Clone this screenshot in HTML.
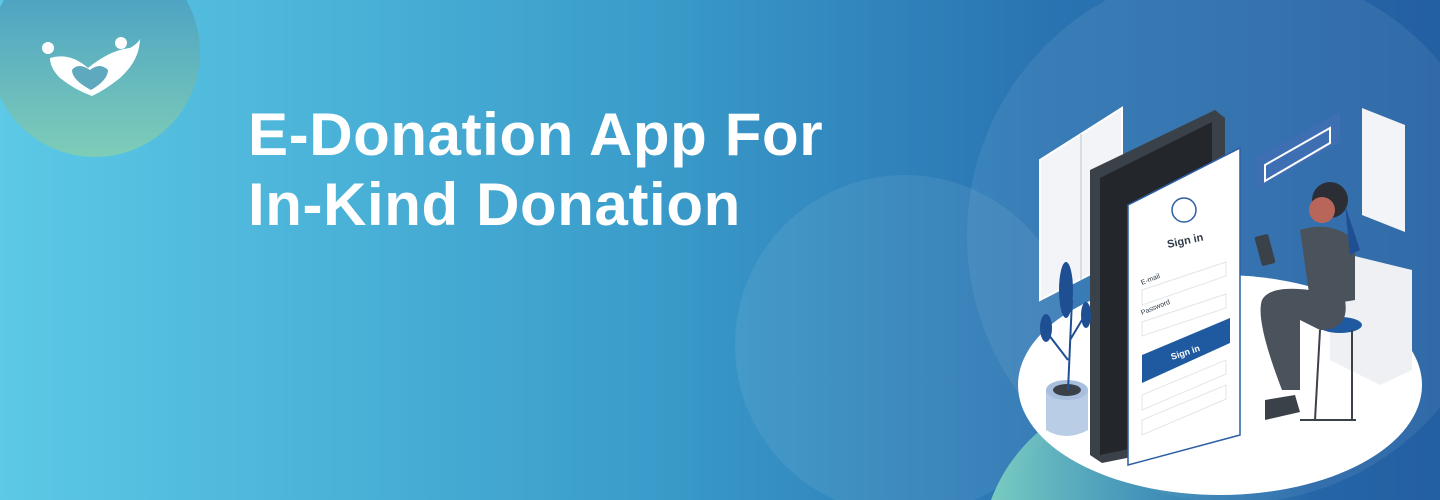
<!DOCTYPE html>
<html><head><meta charset="utf-8"><style>
html,body{margin:0;padding:0;width:1440px;height:500px;overflow:hidden}
body{position:relative;background:linear-gradient(90deg,#5cc9e6 0%,#3a9cca 45%,#2a74b2 72%,#235fa2 100%);font-family:"Liberation Sans",sans-serif}
.t{position:absolute;left:248px;color:#fff;font-weight:bold;font-size:60px;letter-spacing:0.6px;line-height:70px;top:100px;white-space:nowrap}
svg{position:absolute;left:0;top:0}
</style></head><body>
<svg width="1440" height="500" viewBox="0 0 1440 500">
<defs>
<linearGradient id="g1" x1="0" y1="0" x2="0" y2="1"><stop offset="0" stop-color="#3f97c6"/><stop offset="1" stop-color="#7ecdb8"/></linearGradient>
<linearGradient id="g2" x1="0" y1="0" x2="1" y2="0"><stop offset="0" stop-color="#7dd0c0"/><stop offset="1" stop-color="#3f9ac8" stop-opacity="0"/></linearGradient>
</defs>
<circle cx="95" cy="52" r="105" fill="url(#g1)"/>
<circle cx="1235" cy="235" r="268" fill="#ffffff" fill-opacity="0.07"/>
<circle cx="905" cy="345" r="170" fill="#ffffff" fill-opacity="0.07"/>
<circle cx="1150" cy="560" r="170" fill="url(#g2)"/>
<!-- logo -->
<circle cx="48" cy="48" r="6" fill="#fff"/>
<circle cx="121" cy="43" r="6" fill="#fff"/>
<path d="M50 58 Q70 52 88 68 Q110 50 130 48 Q140 42 140 38 Q140 60 120 78 Q105 90 92 96 Q75 90 60 78 Q50 68 50 58Z" fill="#fff"/>
<path d="M72 70 Q78 62 90 70 Q100 62 108 70 Q108 80 91 90 Q72 80 72 70Z" fill="#5fa9bf"/>
<!-- floor -->
<ellipse cx="1220" cy="385" rx="202" ry="110" fill="#fff"/>
<!-- windows -->
<polygon points="1040,160 1122,108 1122,258 1040,300" fill="#f2f4f7" stroke="#fff" stroke-width="2"/>
<line x1="1081" y1="134" x2="1081" y2="280" stroke="#d8dde4" stroke-width="2"/>
<polygon points="1362,108 1405,125 1405,232 1362,215" fill="#f2f4f7"/>
<!-- bubble -->
<polygon points="1255,158 1340,112 1340,142 1255,190" fill="#3f6fb3"/>
<polygon points="1265,165 1330,128 1330,143 1265,181" fill="none" stroke="#fff" stroke-width="2"/>
<!-- phone -->
<polygon points="1090,170 1215,110 1225,118 1225,438 1102,463 1090,455" fill="#3b4148"/>
<polygon points="1100,178 1212,122 1212,432 1100,455" fill="#23272c"/>
<polygon points="1128,205 1240,148 1240,435 1128,465" fill="#fff" stroke="#2c5fa3" stroke-width="1.5"/>
<circle cx="1184" cy="210" r="12" fill="none" stroke="#2c5fa3" stroke-width="1.5"/>
<text x="1168" y="248" font-size="11" font-weight="bold" fill="#2f3a48" transform="rotate(-12 1168 248)">Sign in</text>
<text x="1142" y="285" font-size="7" fill="#2f3a48" transform="rotate(-22 1142 285)">E-mail</text>
<text x="1142" y="315" font-size="7" fill="#2f3a48" transform="rotate(-22 1142 315)">Password</text>
<polygon points="1142,290 1226,262 1226,276 1142,305" fill="none" stroke="#e3e6ea"/>
<polygon points="1142,322 1226,294 1226,308 1142,336" fill="none" stroke="#e3e6ea"/>
<polygon points="1142,355 1230,318 1230,343 1142,383" fill="#1f5aa0"/>
<text x="1172" y="360" font-size="9" font-weight="bold" fill="#fff" transform="rotate(-18 1172 360)">Sign in</text>
<polygon points="1142,395 1226,360 1226,374 1142,410" fill="none" stroke="#e3e6ea"/>
<polygon points="1142,420 1226,385 1226,399 1142,435" fill="none" stroke="#e3e6ea"/>
<!-- plant -->
<path d="M1046 390 L1046 430 Q1066 442 1088 430 L1088 390Z" fill="#b9cde6"/>
<ellipse cx="1067" cy="390" rx="21" ry="10" fill="#a8bedd"/>
<ellipse cx="1067" cy="390" rx="14" ry="6" fill="#3b4148"/>
<path d="M1068 390 L1072 300 M1068 360 L1045 330 M1070 340 L1085 315" stroke="#1f4f93" stroke-width="2" fill="none"/>
<ellipse cx="1066" cy="290" rx="7" ry="28" fill="#1f4f93"/>
<ellipse cx="1046" cy="328" rx="6" ry="14" fill="#1f4f93"/>
<ellipse cx="1086" cy="315" rx="5" ry="13" fill="#1f4f93"/>
<!-- cabinet -->
<polygon points="1330,250 1412,270 1412,370 1380,385 1330,360" fill="#eef0f3"/>
<!-- person -->
<ellipse cx="1340" cy="325" rx="22" ry="8" fill="#1f5aa0"/>
<path d="M1320 330 L1315 420 M1352 330 L1352 420 M1300 420 L1356 420" stroke="#3b4148" stroke-width="2" fill="none"/>
<path d="M1300 230 Q1330 220 1355 240 L1355 300 Q1330 305 1310 300Z" fill="#4a525c"/>
<path d="M1262 300 Q1270 285 1310 290 L1345 300 Q1350 330 1320 330 L1300 320 L1300 390 L1282 390 Q1255 320 1262 300Z" fill="#4a525c"/>
<path d="M1265 400 L1295 395 L1300 412 L1265 420Z" fill="#3b4148"/>
<circle cx="1330" cy="200" r="18" fill="#2b2f35"/>
<circle cx="1322" cy="210" r="13" fill="#b8665a"/>
<path d="M1345 205 L1360 250 L1350 255 Z" fill="#1f4f93"/>
<rect x="1258" y="235" width="14" height="30" rx="2" fill="#3b4148" transform="rotate(-15 1265 250)"/>
</svg>
<div class="t">E-Donation App For<br>In-Kind Donation</div>
</body></html>
